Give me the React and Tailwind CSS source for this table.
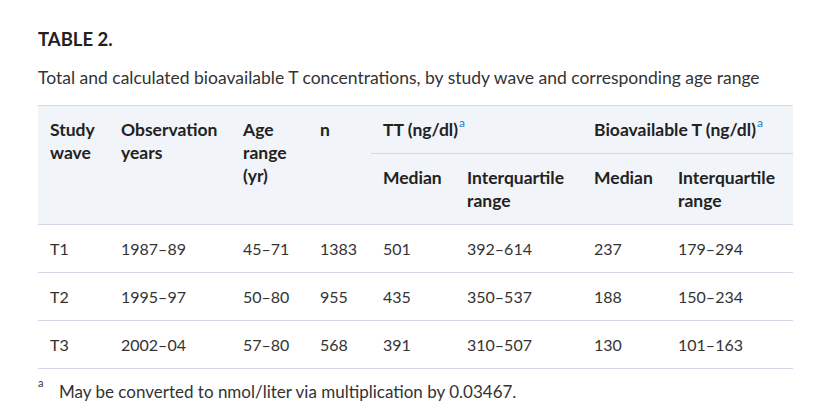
const rows = [
  ["T1", "1987–89", "45–71", "1383", "501", "392–614", "237", "179–294"],
  ["T2", "1995–97", "50–80", "955", "435", "350–537", "188", "150–234"],
  ["T3", "2002–04", "57–80", "568", "391", "310–507", "130", "101–163"],
];

const widths = ["w-[71px]", "w-[122px]", "w-[77px]", "w-[63px]", "w-[84px]", "w-[127px]", "w-[84px]", "w-[127px]"];

function Sup() {
  return <sup className="text-[12px] font-normal text-[#1d7fc4] relative -top-[9px] ml-[1px]">a</sup>;
}

export default function App() {
  return (
    <div className="bg-white w-[832px] h-[417px] px-[38px] pt-[28px] text-[#222] font-['Lato','Liberation_Sans',sans-serif]">
      <h3 className="text-[18.5px] font-bold leading-[22px] text-[#222]">TABLE 2.</h3>
      <p className="mt-[16px] text-[17.5px] leading-[24px] text-[#333]">
        Total and calculated bioavailable T concentrations, by study wave and corresponding age range
      </p>
      <table className="mt-[15px] w-[755px] table-fixed border-collapse text-[16px] leading-[23px]">
        <colgroup>
          {widths.map((w, i) => (
            <col key={i} className={w} />
          ))}
        </colgroup>
        <thead className="bg-[#f1f4f9] font-bold text-[17.5px] text-[#222]">
          <tr className="border-t border-[#d2d8e8]">
            <th rowSpan={2} className="align-top text-left font-bold px-3 py-3">Study wave</th>
            <th rowSpan={2} className="align-top text-left font-bold px-3 py-3">Observation years</th>
            <th rowSpan={2} className="align-top text-left font-bold px-3 py-3">Age range (yr)</th>
            <th rowSpan={2} className="align-top text-left font-bold px-3 py-3">n</th>
            <th colSpan={2} className="align-top text-left font-bold px-3 py-3 border-b border-[#d2d8e8]">
              TT (ng/dl)<Sup />
            </th>
            <th colSpan={2} className="align-top text-left font-bold px-3 py-3 border-b border-[#d2d8e8]">
              Bioavailable T (ng/dl)<Sup />
            </th>
          </tr>
          <tr className="border-b border-[#d2d8e8]">
            <th className="align-top text-left font-bold px-3 py-3">Median</th>
            <th className="align-top text-left font-bold px-3 py-3">Interquartile range</th>
            <th className="align-top text-left font-bold px-3 py-3">Median</th>
            <th className="align-top text-left font-bold px-3 py-3">Interquartile range</th>
          </tr>
        </thead>
        <tbody>
          {rows.map((r) => (
            <tr key={r[0]} className="border-b border-[#d2d8e8]">
              {r.map((c, i) => (
                <td key={i} className="px-3 py-3 text-left text-[#333]">{c}</td>
              ))}
            </tr>
          ))}
        </tbody>
      </table>
      <div className="mt-[7px] flex text-[17px] leading-[24px] text-[#333]">
        <span className="w-[21px] text-[11px] leading-[14px]">a</span>
        <span className="mt-[4px]">May be converted to nmol/liter via multiplication by 0.03467.</span>
      </div>
    </div>
  );
}
